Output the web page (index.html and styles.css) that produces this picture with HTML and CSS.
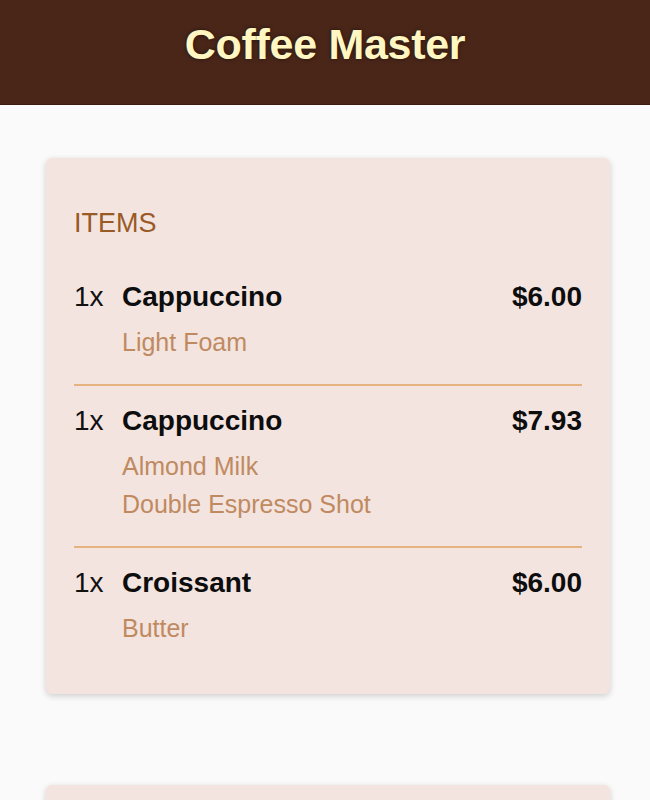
FILE: index.html
```html
<!DOCTYPE html>
<html lang="en">
<head>
<meta charset="utf-8">
<title>Coffee Master</title>
<link rel="stylesheet" href="styles.css">
</head>
<body>
<header class="app-header">
  <h1 class="app-title">Coffee Master</h1>
</header>
<main class="content">
  <section class="card">
    <h2 class="card-title">ITEMS</h2>
    <ul class="item-list">
      <li class="item">
        <div class="item-row">
          <span class="qty">1x</span>
          <span class="name">Cappuccino</span>
          <span class="price">$6.00</span>
        </div>
        <div class="mods">
          <span class="mod">Light Foam</span>
        </div>
      </li>
      <li class="item">
        <div class="item-row">
          <span class="qty">1x</span>
          <span class="name">Cappuccino</span>
          <span class="price">$7.93</span>
        </div>
        <div class="mods">
          <span class="mod">Almond Milk</span>
          <span class="mod">Double Espresso Shot</span>
        </div>
      </li>
      <li class="item">
        <div class="item-row">
          <span class="qty">1x</span>
          <span class="name">Croissant</span>
          <span class="price">$6.00</span>
        </div>
        <div class="mods">
          <span class="mod">Butter</span>
        </div>
      </li>
    </ul>
  </section>
  <section class="card card-next"></section>
</main>
</body>
</html>
```
FILE: styles.css
```css
* { box-sizing: border-box; }
html, body { margin: 0; padding: 0; }
body {
  background: #fafafa;
  font-family: "Liberation Sans", Arial, sans-serif;
  color: #111;
  overflow: hidden;
  height: 800px;
}
.app-header {
  height: 105px;
  background: #4a2619;
  border-bottom: 1px solid #3d1d12;
  display: flex;
  justify-content: center;
  padding-top: 12px;
}
.app-title {
  margin: 0;
  font-size: 43px;
  line-height: 64px;
  font-weight: 700;
  color: #fff6c2;
  text-shadow: 0 0 4px rgba(0,0,0,0.55);
  letter-spacing: -0.3px;
}
.content {
  padding: 53px 40px 0 46px;
  display: flex;
  flex-direction: column;
  gap: 91px;
}
.card {
  background: #f3e4e0;
  border-radius: 6px;
  box-shadow: 0 2px 6px rgba(0,0,0,0.18);
  padding: 28px 28px 24px;
}
.card-title {
  margin: 18px 0 20px;
  font-size: 27px;
  line-height: 38px;
  font-weight: 400;
  color: #9a5a26;
}
.item-list {
  list-style: none;
  margin: 0;
  padding: 0;
}
.item {
  padding: 15px 0 23px;
  border-top: 2px solid #e6b27f;
}
.item:first-child { border-top: none; padding-top: 15px; }
.item-row {
  display: grid;
  grid-template-columns: 48px 1fr auto;
  align-items: center;
  font-size: 28px;
  line-height: 40px;
}
.qty { font-weight: 400; color: #111; }
.name { font-weight: 700; color: #0d0d0d; }
.price { font-weight: 700; color: #0d0d0d; }
.mods {
  display: flex;
  flex-direction: column;
  padding-left: 48px;
  margin-top: 6px;
}
.mod {
  font-size: 25px;
  line-height: 38px;
  color: #c08a60;
}
.card-next {
  height: 60px;
  padding: 0;
}
```
